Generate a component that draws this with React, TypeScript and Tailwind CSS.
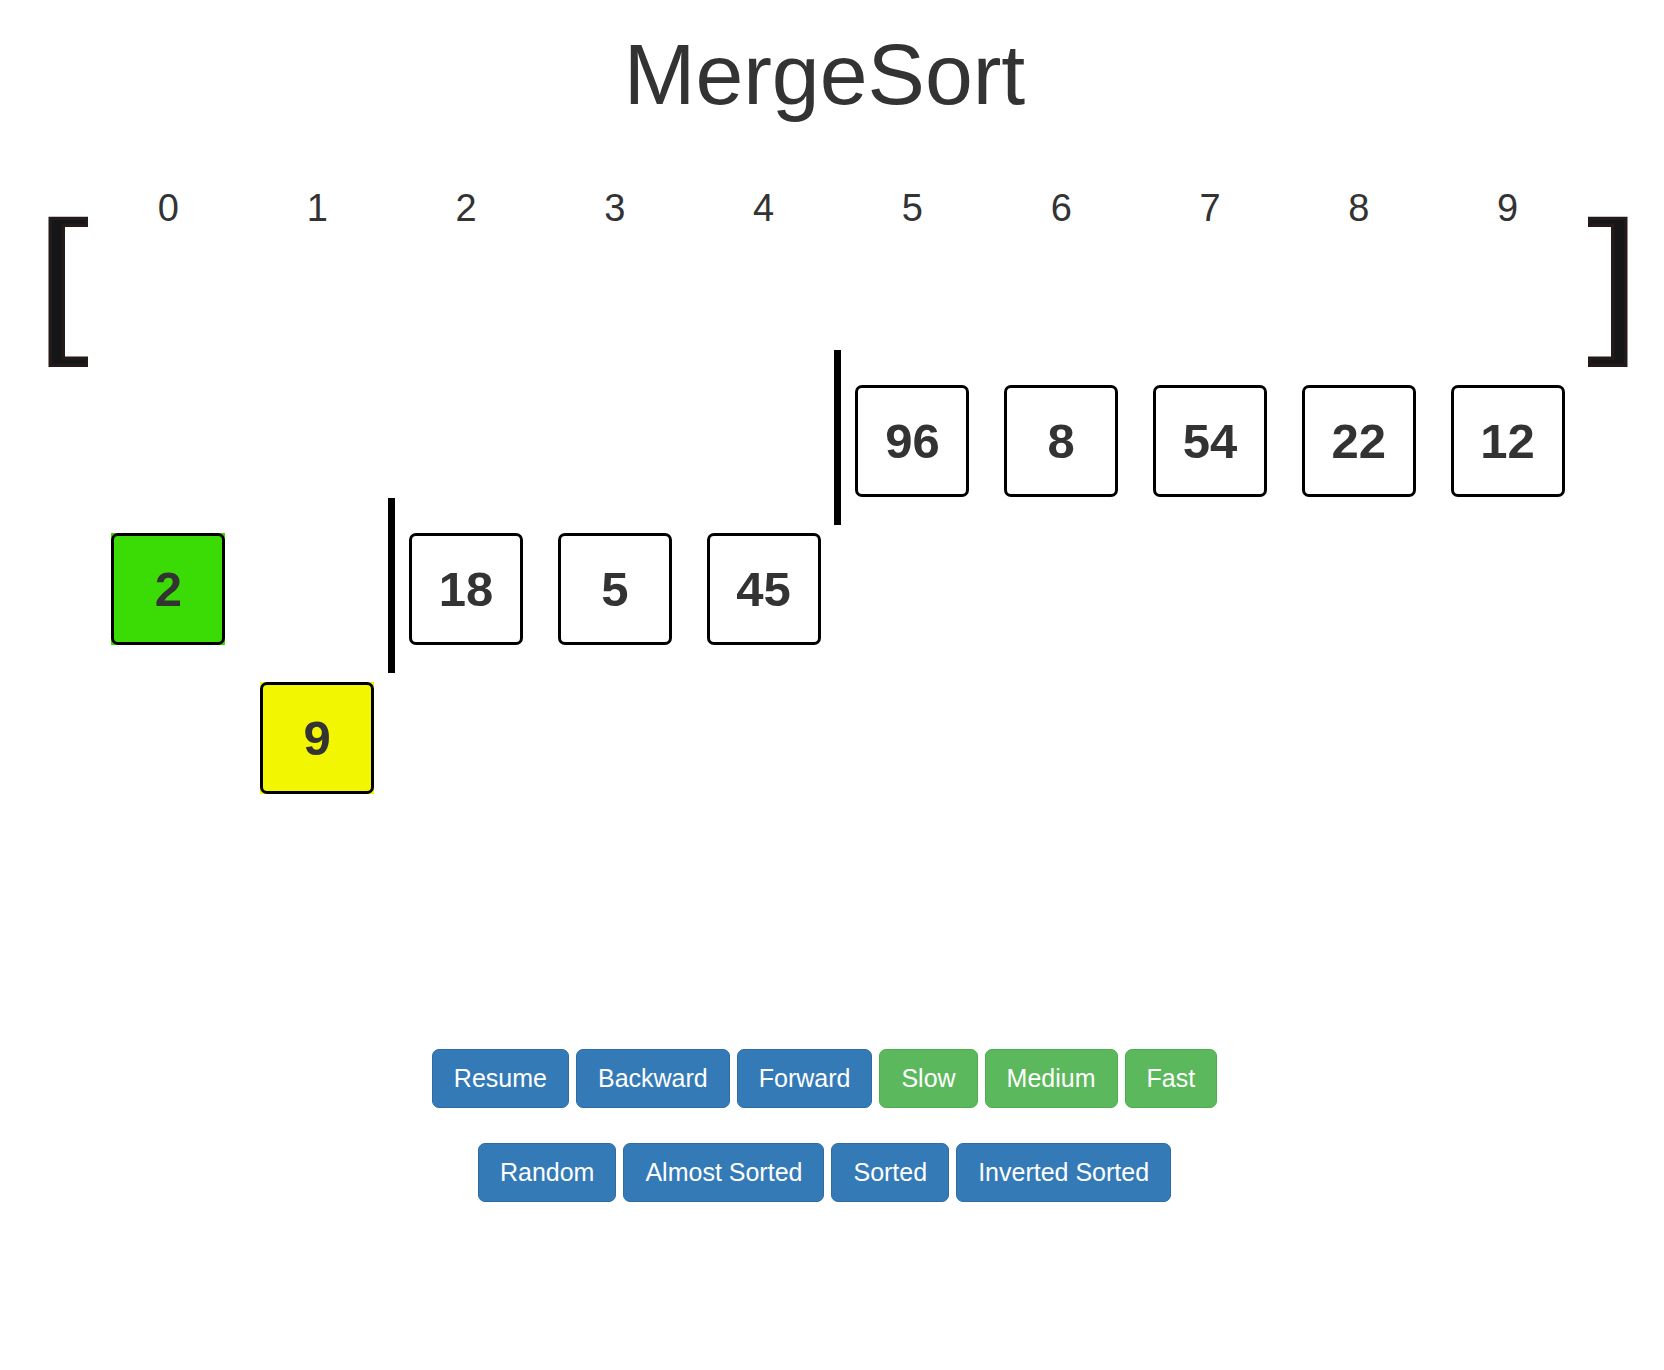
type Tone = 'plain' | 'sorted' | 'active';

type Item = { value: number; column: string; level: string; tone: Tone };

const indices = [0, 1, 2, 3, 4, 5, 6, 7, 8, 9];

const items: Item[] = [
  { value: 2, column: 'col-start-1', level: 'row-start-3', tone: 'sorted' },
  { value: 9, column: 'col-start-2', level: 'row-start-4', tone: 'active' },
  { value: 18, column: 'col-start-3', level: 'row-start-3', tone: 'plain' },
  { value: 5, column: 'col-start-4', level: 'row-start-3', tone: 'plain' },
  { value: 45, column: 'col-start-5', level: 'row-start-3', tone: 'plain' },
  { value: 96, column: 'col-start-6', level: 'row-start-2', tone: 'plain' },
  { value: 8, column: 'col-start-7', level: 'row-start-2', tone: 'plain' },
  { value: 54, column: 'col-start-8', level: 'row-start-2', tone: 'plain' },
  { value: 22, column: 'col-start-9', level: 'row-start-2', tone: 'plain' },
  { value: 12, column: 'col-start-10', level: 'row-start-2', tone: 'plain' },
];

// Each split is drawn on the left edge of the column it precedes.
const splits = ['col-start-6 row-start-2', 'col-start-3 row-start-3'];

const tones: Record<Tone, string> = {
  plain: 'bg-white',
  sorted: 'bg-[#3bdc06]',
  active: 'bg-[#f2f600]',
};

const blue = 'bg-[#337ab7] border-[#2e6da4]';
const green = 'bg-[#5cb85c] border-[#4cae4c]';

const playback = [
  { label: 'Resume', color: blue },
  { label: 'Backward', color: blue },
  { label: 'Forward', color: blue },
  { label: 'Slow', color: green },
  { label: 'Medium', color: green },
  { label: 'Fast', color: green },
];

const presets = ['Random', 'Almost Sorted', 'Sorted', 'Inverted Sorted'].map((label) => ({
  label,
  color: blue,
}));

function Bracket({ flipped = false }: { flipped?: boolean }) {
  return (
    <svg
      viewBox="0 0 40 151"
      aria-hidden="true"
      className={`mt-[40px] h-[151px] w-10 shrink-0 ${flipped ? '-scale-x-100' : ''}`}
    >
      <path d="M.5 .7H40V11H17V140.500H40V151H.5Z" fill="#231a19" />
      <path d="M4 4H37V7.500H13.500V144H37V147.500H4Z" fill="#151617" />
    </svg>
  );
}

function ButtonRow({ buttons, label }: { buttons: { label: string; color: string }[]; label: string }) {
  return (
    <div role="group" aria-label={label} className="flex flex-wrap justify-center gap-[7px]">
      {buttons.map((button) => (
        <button
          key={button.label}
          type="button"
          className={`cursor-pointer rounded-[7px] border px-[21px] pt-[11px] pb-3 text-[25px] leading-[34px] text-white ${button.color}`}
        >
          {button.label}
        </button>
      ))}
    </div>
  );
}

export default function App() {
  return (
    <main className="min-h-screen bg-white font-['Liberation_Sans',Arial,sans-serif] text-[#333]">
      <h1 className="pt-[26px] pr-[15px] text-center text-[86px] leading-[96px]">MergeSort</h1>

      <section aria-label="Array" className="mt-[54px] flex items-start gap-[6px] pr-9 pl-12">
        <Bracket />
        <div className="grid flex-1 grid-cols-10 grid-rows-[174px_148px_149px_148px_148px]">
          {indices.map((index) => (
            <div key={index} className="row-start-1 mt-2 text-center text-[38px] leading-[48px]">
              {index}
            </div>
          ))}
          {splits.map((place) => (
            <div key={place} className={`-ml-1 h-[175px] w-[7px] bg-black ${place}`} />
          ))}
          {items.map((item) => (
            <div
              key={item.value}
              className={`mt-[35px] h-[112px] w-[114px] justify-self-center ${item.column} ${item.level} ${tones[item.tone]}`}
            >
              <div className="flex h-full items-center justify-center rounded-[7px] border-3 border-black text-[49px] leading-none font-bold">
                {item.value}
              </div>
            </div>
          ))}
        </div>
        <Bracket flipped />
      </section>

      <footer className="mt-[106px] flex flex-col gap-[35px] pr-[15px] pb-10">
        <ButtonRow buttons={playback} label="Playback" />
        <ButtonRow buttons={presets} label="Array presets" />
      </footer>
    </main>
  );
}
